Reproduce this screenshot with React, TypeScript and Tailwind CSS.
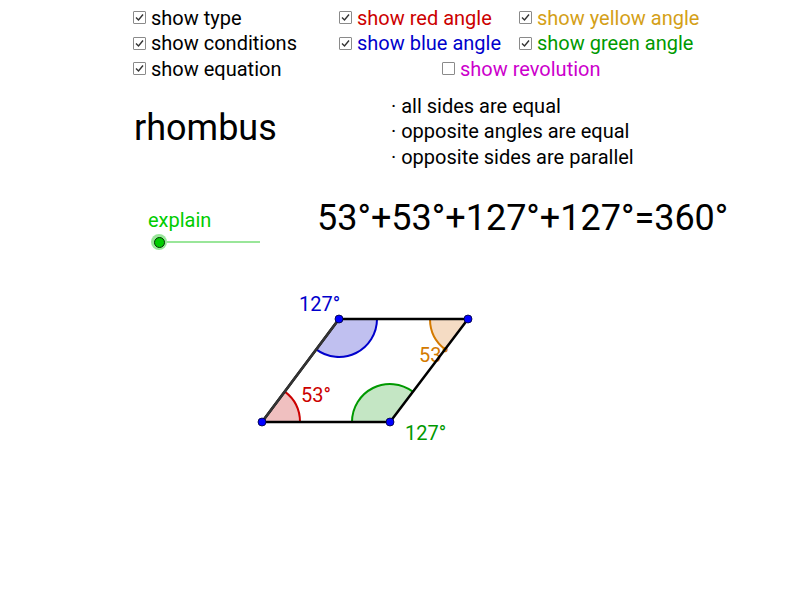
import React from 'react';

const Check = ({ checked = true, label, color }: { checked?: boolean; label: string; color: string }) => (
    <div className="flex items-center gap-[5px]">
        <div className="w-[13px] h-[13px] border border-[#8a8a8a] rounded-[1px] bg-white flex items-center justify-center">
            {checked && (
                <svg width="11" height="11" viewBox="0 0 11 11">
                    <path d="M2 5.5 L4.5 8 L9 2.5" fill="none" stroke="#333" strokeWidth="1.4" />
                </svg>
            )}
        </div>
        <span className="text-[20px] leading-none" style={{ color }}>{label}</span>
    </div>
);

const Rhombus = () => {
    const A = [262, 422], B = [390, 422], C = [468, 319], D = [339, 319];
    const r = 38;
    const rad = (deg: number) => (deg * Math.PI) / 180;
    // point on circle around p, math angle (y up)
    const pt = (p: number[], deg: number, rr = r) => [p[0] + rr * Math.cos(rad(deg)), p[1] - rr * Math.sin(rad(deg))];
    const sector = (p: number[], a0: number, a1: number, rr = r) => {
        const s = pt(p, a0, rr), e = pt(p, a1, rr);
        const large = Math.abs(a1 - a0) > 180 ? 1 : 0;
        const sweep = a1 > a0 ? 0 : 1;
        return {
            fill: `M${p[0]} ${p[1]} L${s[0]} ${s[1]} A${rr} ${rr} 0 ${large} ${sweep} ${e[0]} ${e[1]} Z`,
            arc: `M${s[0]} ${s[1]} A${rr} ${rr} 0 ${large} ${sweep} ${e[0]} ${e[1]}`,
        };
    };
    const ang = 53.1;
    const red = sector(A, 0, ang);
    const green = sector(B, ang, 180);
    const blue = sector(D, 0, -(180 - ang));
    const orange = sector(C, 180, 180 + ang);
    return (
        <svg className="absolute left-0 top-0" width="800" height="600" viewBox="0 0 800 600">
            <path d={red.fill} fill="#f0c0c0" />
            <path d={red.arc} fill="none" stroke="#cc0000" strokeWidth="2" />
            <path d={green.fill} fill="#c4e6c4" />
            <path d={green.arc} fill="none" stroke="#009900" strokeWidth="2" />
            <path d={blue.fill} fill="#c0c0f0" />
            <path d={blue.arc} fill="none" stroke="#0000cc" strokeWidth="2" />
            <path d={orange.fill} fill="#f5dcc4" />
            <path d={orange.arc} fill="none" stroke="#d47a00" strokeWidth="2" />
            <text x="299" y="311" fontSize="20" fill="#0000cc" fontFamily="Roboto">127°</text>
            <text x="301" y="402" fontSize="20" fill="#cc0000" fontFamily="Roboto">53°</text>
            <text x="405" y="440" fontSize="20" fill="#009900" fontFamily="Roboto">127°</text>
            <text x="419" y="362" fontSize="20" fill="#d47a00" fontFamily="Roboto">53°</text>
            <polygon points={`${A} ${B} ${C} ${D}`} fill="none" stroke="#000" strokeWidth="2.5" />
            <line x1={A[0]} y1={A[1]} x2={D[0]} y2={D[1]} stroke="#333" strokeWidth="2.5" />
            {[A, B, C, D].map((p, i) => (
                <circle key={i} cx={p[0]} cy={p[1]} r="4" fill="#0000ff" stroke="#000033" strokeWidth="0.8" />
            ))}
        </svg>
    );
};

export default function App() {
    return (
        <div className="relative w-[800px] h-[600px] bg-white overflow-hidden text-black" style={{ fontFamily: 'Roboto, sans-serif' }}>
            <Rhombus />
            <div className="relative pl-[133px] pt-[5px]">
                <div className="flex h-[25.5px] items-center">
                    <div className="w-[206px]"><Check label="show type" color="#000" /></div>
                    <div className="w-[180px]"><Check label="show red angle" color="#cc0000" /></div>
                    <Check label="show yellow angle" color="#d4a017" />
                </div>
                <div className="flex h-[25.5px] items-center">
                    <div className="w-[206px]"><Check label="show conditions" color="#000" /></div>
                    <div className="w-[180px]"><Check label="show blue angle" color="#0000cc" /></div>
                    <Check label="show green angle" color="#009900" />
                </div>
                <div className="flex h-[25.5px] items-center">
                    <div className="w-[309px]"><Check label="show equation" color="#000" /></div>
                    <Check checked={false} label="show revolution" color="#cc00cc" />
                </div>

                <div className="flex mt-[12px]">
                    <div className="w-[258px] pt-[16px] text-[36px] leading-none pl-[1px]">rhombus</div>
                    <div className="text-[20px] leading-[25.5px]">
                        <div>· all sides are equal</div>
                        <div>· opposite angles are equal</div>
                        <div>· opposite sides are parallel</div>
                    </div>
                </div>

                <div className="flex mt-[30px]">
                    <div className="w-[184px] pl-[15px] pt-[10px]">
                        <div className="text-[20px] leading-none text-[#00cc00]">explain</div>
                        <div className="flex items-center mt-[4px] ml-[3px]">
                            <div className="w-[16px] h-[16px] rounded-full bg-[#99e699] flex items-center justify-center">
                                <div className="w-[11px] h-[11px] rounded-full bg-[#00cc00] border border-[#003300]" />
                            </div>
                            <div className="w-[93px] h-[1.5px] bg-[#99e699]" />
                        </div>
                    </div>
                    <div className="text-[36px] leading-none">53°+53°+127°+127°=360°</div>
                </div>
            </div>
        </div>
    );
}
